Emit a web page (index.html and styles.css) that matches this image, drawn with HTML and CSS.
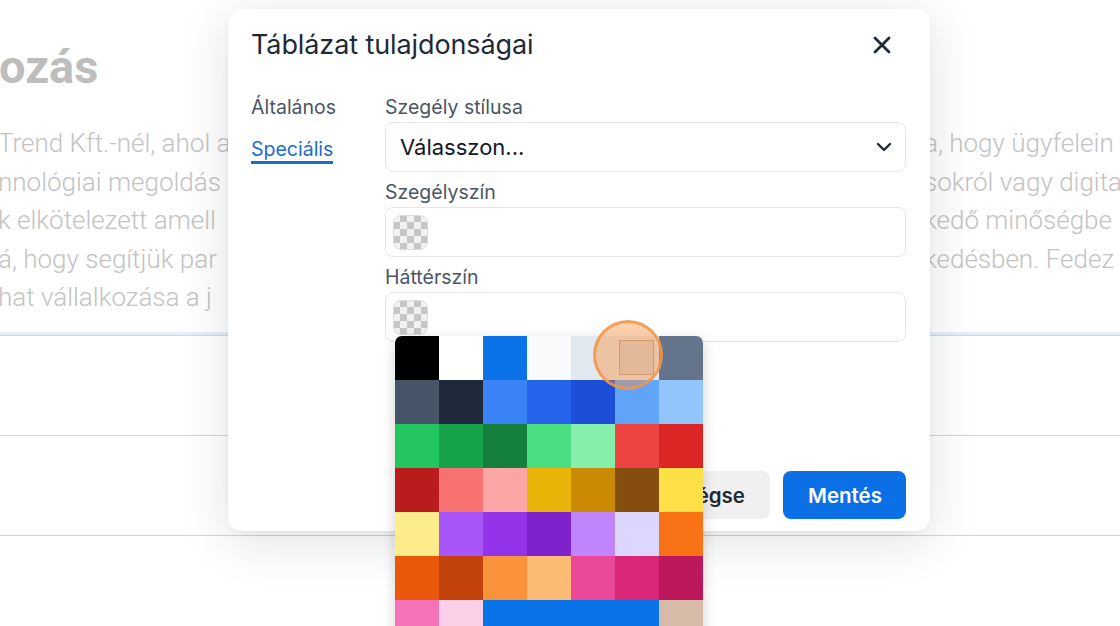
FILE: index.html
```html
<!DOCTYPE html>
<html lang="hu">
<head>
<meta charset="utf-8">
<title>Táblázat tulajdonságai</title>
<link rel="stylesheet" href="styles.css">
</head>
<body>
<div class="page">
  <h1 class="bg-title">ozás</h1>
  <div class="bg-text">
    <div class="bg-line"><span class="bg-left">Trend Kft.-nél, ahol a</span><span class="bg-right">a, hogy ügyfelein</span></div>
    <div class="bg-line"><span class="bg-left">nnológiai megoldás</span><span class="bg-right">sokról vagy digita</span></div>
    <div class="bg-line"><span class="bg-left">k elkötelezett amell</span><span class="bg-right">kedő minőségbe</span></div>
    <div class="bg-line"><span class="bg-left">á, hogy segítjük par</span><span class="bg-right">kedésben. Fedez</span></div>
    <div class="bg-line"><span class="bg-left">hat vállalkozása a j</span><span class="bg-right"></span></div>
  </div>
  <div class="bg-rule"></div>
  <div class="bg-row"></div>
  <div class="bg-row"></div>
</div>

<div class="dialog">
  <div class="dialog-header">
    <h2 class="dialog-title">Táblázat tulajdonságai</h2>
    <button class="close-btn" aria-label="Bezárás">
      <svg width="18" height="18" viewBox="0 0 18 18"><path d="M2 2 L16 16 M16 2 L2 16" stroke="#1f2937" stroke-width="2.8" stroke-linecap="round" fill="none"/></svg>
    </button>
  </div>
  <div class="dialog-body">
    <nav class="side-nav">
      <div class="nav-item">Általános</div>
      <div class="nav-item active">Speciális</div>
    </nav>
    <div class="form">
      <div class="field">
        <label class="field-label">Szegély stílusa</label>
        <div class="select">
          <span>Válasszon...</span>
          <svg width="16" height="10" viewBox="0 0 16 10"><polyline points="2,2 8,8 14,2" stroke="#1f2937" stroke-width="2.4" stroke-linecap="round" stroke-linejoin="round" fill="none"/></svg>
        </div>
      </div>
      <div class="field">
        <label class="field-label">Szegélyszín</label>
        <div class="color-input"><span class="swatch"></span></div>
      </div>
      <div class="field">
        <label class="field-label">Háttérszín</label>
        <div class="color-input"><span class="swatch"></span></div>
        <div class="palette">
          <span class="c" style="background:#000000"></span>
          <span class="c" style="background:#ffffff"></span>
          <span class="c" style="background:#0b73e8"></span>
          <span class="c" style="background:#f8fafc"></span>
          <span class="c" style="background:#e2e8f0"></span>
          <span class="c hover" style="background:#e2e8f0"><span class="inner"></span></span>
          <span class="c" style="background:#64748b"></span>

          <span class="c" style="background:#475569"></span>
          <span class="c" style="background:#1e293b"></span>
          <span class="c" style="background:#3b82f6"></span>
          <span class="c" style="background:#2563eb"></span>
          <span class="c" style="background:#1d4ed8"></span>
          <span class="c" style="background:#60a5fa"></span>
          <span class="c" style="background:#93c5fd"></span>

          <span class="c" style="background:#22c55e"></span>
          <span class="c" style="background:#16a34a"></span>
          <span class="c" style="background:#15803d"></span>
          <span class="c" style="background:#4ade80"></span>
          <span class="c" style="background:#86efac"></span>
          <span class="c" style="background:#ef4444"></span>
          <span class="c" style="background:#dc2626"></span>

          <span class="c" style="background:#b91c1c"></span>
          <span class="c" style="background:#f87171"></span>
          <span class="c" style="background:#fca5a5"></span>
          <span class="c" style="background:#eab308"></span>
          <span class="c" style="background:#ca8a04"></span>
          <span class="c" style="background:#854d0e"></span>
          <span class="c" style="background:#fde047"></span>

          <span class="c" style="background:#fdec8a"></span>
          <span class="c" style="background:#a855f7"></span>
          <span class="c" style="background:#9333ea"></span>
          <span class="c" style="background:#7e22ce"></span>
          <span class="c" style="background:#c084fc"></span>
          <span class="c" style="background:#ddd6fe"></span>
          <span class="c" style="background:#f97316"></span>

          <span class="c" style="background:#ea580c"></span>
          <span class="c" style="background:#c2410c"></span>
          <span class="c" style="background:#fb923c"></span>
          <span class="c" style="background:#fdba74"></span>
          <span class="c" style="background:#ec4899"></span>
          <span class="c" style="background:#db2777"></span>
          <span class="c" style="background:#be185d"></span>

          <span class="c" style="background:#f472b6"></span>
          <span class="c" style="background:#fbcfe8"></span>
          <span class="c wide" style="background:#0b73e8"></span>
          <span class="c" style="background:#d6bba8"></span>

          <span class="pointer"></span>
        </div>
      </div>
    </div>
  </div>
  <div class="dialog-footer">
    <button class="btn btn-secondary">Mégse</button>
    <button class="btn btn-primary">Mentés</button>
  </div>
</div>
</body>
</html>
```

FILE: styles.css
```css
* { box-sizing: border-box; }

html, body {
  margin: 0;
  padding: 0;
}

body {
  width: 1120px;
  height: 626px;
  overflow: hidden;
  position: relative;
  background: #ffffff;
  font-family: "Inter", "Noto Sans", sans-serif;
}

/* Background page */
.page {
  padding-top: 39px;
  font-family: "Roboto", "Liberation Sans", sans-serif;
}

.bg-title {
  margin: 0 0 0 -1px;
  font-size: 47px;
  line-height: 56px;
  font-weight: 700;
  color: #bdbdbd;
}

.bg-text {
  margin-top: 29px;
}

.bg-line {
  display: flex;
  justify-content: space-between;
  height: 38.5px;
  line-height: 38.5px;
  font-size: 26px;
  font-weight: 300;
  color: #c3c3c3;
  white-space: nowrap;
}

.bg-left {
  margin-left: -2px;
}

.bg-right {
  width: 196px;
  overflow: hidden;
}

.bg-rule {
  margin-top: 15px;
  height: 4px;
  background: linear-gradient(#e9eff8 0 3px, #d3d6db 3px);
}

.bg-row {
  height: 100px;
  border-bottom: 1px solid #d4d4d4;
}

/* Dialog */
.dialog {
  position: absolute;
  left: 228px;
  top: 9px;
  width: 702px;
  height: 522px;
  background: #ffffff;
  border-radius: 14px;
  box-shadow: 0 10px 50px rgba(15, 23, 42, 0.13), 0 2px 6px rgba(15, 23, 42, 0.04);
  display: flex;
  flex-direction: column;
}

.dialog-header {
  display: flex;
  justify-content: space-between;
  align-items: center;
  padding: 20px 39px 0 23px;
}

.dialog-title {
  margin: 0;
  font-size: 27px;
  line-height: 32px;
  font-weight: 400;
  color: #1f2937;
  letter-spacing: -0.1px;
}

.close-btn {
  border: 0;
  background: none;
  padding: 0;
  width: 18px;
  height: 18px;
  display: flex;
}

.dialog-body {
  display: flex;
  margin-top: 34px;
  padding: 0 24px 0 23px;
}

.side-nav {
  width: 134px;
  display: flex;
  flex-direction: column;
  align-items: flex-start;
  gap: 18px;
}

.nav-item {
  font-size: 19.5px;
  line-height: 24px;
  color: #4b5563;
}

.nav-item.active {
  color: #1b6bd0;
  border-bottom: 3px solid #1b6bd0;
}

.form {
  flex: 1;
  display: flex;
  flex-direction: column;
  gap: 8px;
}

.field {
  position: relative;
  display: flex;
  flex-direction: column;
}

.field-label {
  font-size: 19.5px;
  line-height: 24px;
  color: #4b5563;
  margin-bottom: 3px;
}

.select {
  height: 50px;
  border: 1px solid #e3e6ea;
  border-radius: 8px;
  display: flex;
  align-items: center;
  justify-content: space-between;
  padding: 0 13px 0 14px;
  font-size: 22px;
  color: #111827;
}

.color-input {
  height: 50px;
  border: 1px solid #e3e6ea;
  border-radius: 8px;
  display: flex;
  align-items: center;
  padding-left: 7px;
}

.swatch {
  width: 35px;
  height: 35px;
  border-radius: 8px;
  border: 1px solid #dcdcdc;
  background: repeating-conic-gradient(#c6c6c6 0 25%, #f1f1f1 0 50%) -1px -1px / 14px 14px;
}

/* Palette popover */
.palette {
  position: absolute;
  left: 10px;
  top: 71px;
  width: 308px;
  display: grid;
  grid-template-columns: repeat(7, 44px);
  grid-auto-rows: 44px;
  border-radius: 7px 7px 0 0;
  box-shadow: 0 4px 14px rgba(0, 0, 0, 0.18);
  z-index: 5;
}

.palette .c {
  display: block;
  position: relative;
}

.palette .c:first-child { border-top-left-radius: 7px; }
.palette .c:nth-child(7) { border-top-right-radius: 7px; }

.palette .c.wide {
  grid-column: span 4;
}

.palette .inner {
  position: absolute;
  left: 4px;
  top: 4px;
  width: 35px;
  height: 35px;
  background: #d0d4dc;
  border: 1px solid #b9a08c;
}

.pointer {
  position: absolute;
  left: 198px;
  top: -16px;
  width: 70px;
  height: 70px;
  border-radius: 50%;
  background: rgba(251, 146, 60, 0.42);
  border: 3px solid rgba(243, 150, 72, 0.85);
}

/* Footer */
.dialog-footer {
  margin-top: auto;
  display: flex;
  justify-content: flex-end;
  gap: 13px;
  padding: 0 24px 12px;
}

.btn {
  height: 48px;
  border: 0;
  border-radius: 8px;
  padding: 0 25px;
  font-family: "Inter", "Noto Sans", sans-serif;
  font-size: 20.5px;
  font-weight: 600;
}

.btn-secondary {
  background: #f0f0f1;
  color: #1f2937;
}

.btn-primary {
  background: #0b70e5;
  color: #ffffff;
  width: 123px;
}
```
